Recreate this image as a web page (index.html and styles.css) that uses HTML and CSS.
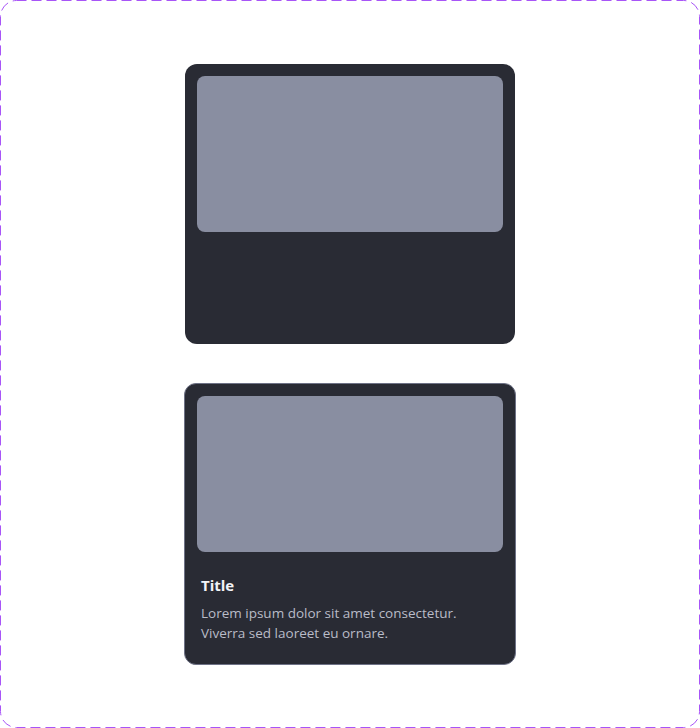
FILE: index.html
```html
<!DOCTYPE html>
<html>
<head>
<meta charset="utf-8">
<link rel="stylesheet" href="styles.css">
</head>
<body>
<div class="frame">
  <div class="card">
    <div class="media"></div>
  </div>
  <div class="card card-outlined">
    <div class="media"></div>
    <div class="body">
      <h3 class="title">Title</h3>
      <p class="text">Lorem ipsum dolor sit amet consectetur.<br>Viverra sed laoreet eu ornare.</p>
    </div>
  </div>
</div>
</body>
</html>
```
FILE: styles.css
```css
* { box-sizing: border-box; }
html, body { margin: 0; padding: 0; background: #fff; }
body { font-family: "Open Sans", "Noto Sans", sans-serif; }
.frame {
  width: 700px;
  height: 728px;
  background-image: url("data:image/svg+xml;utf8,<svg xmlns='http://www.w3.org/2000/svg' width='700' height='728'><rect x='0.5' y='0.5' width='699' height='727' rx='16' ry='16' fill='none' stroke='%23a855f7' stroke-width='1' stroke-dasharray='10 5'/></svg>");
  background-repeat: no-repeat;
  display: flex;
  flex-direction: column;
  align-items: center;
  padding-top: 64px;
  gap: 39px;
}
.card {
  width: 330px;
  height: 280px;
  background: #292b34;
  border-radius: 12px;
  padding: 12px;
  display: flex;
  flex-direction: column;
}
.card-outlined {
  width: 332px;
  height: 282px;
  border: 1px solid #6e7286;
}
.media {
  height: 156px;
  background: #898ea1;
  border-radius: 8px;
  flex-shrink: 0;
}
.body {
  padding: 0 4px;
}
.title {
  margin: 23px 0 0;
  font-size: 15px;
  font-weight: 700;
  line-height: 20px;
  color: #f2f3f6;
}
.text {
  margin: 8px 0 0;
  font-size: 13.5px;
  line-height: 20px;
  color: #b9bcc8;
}
```
